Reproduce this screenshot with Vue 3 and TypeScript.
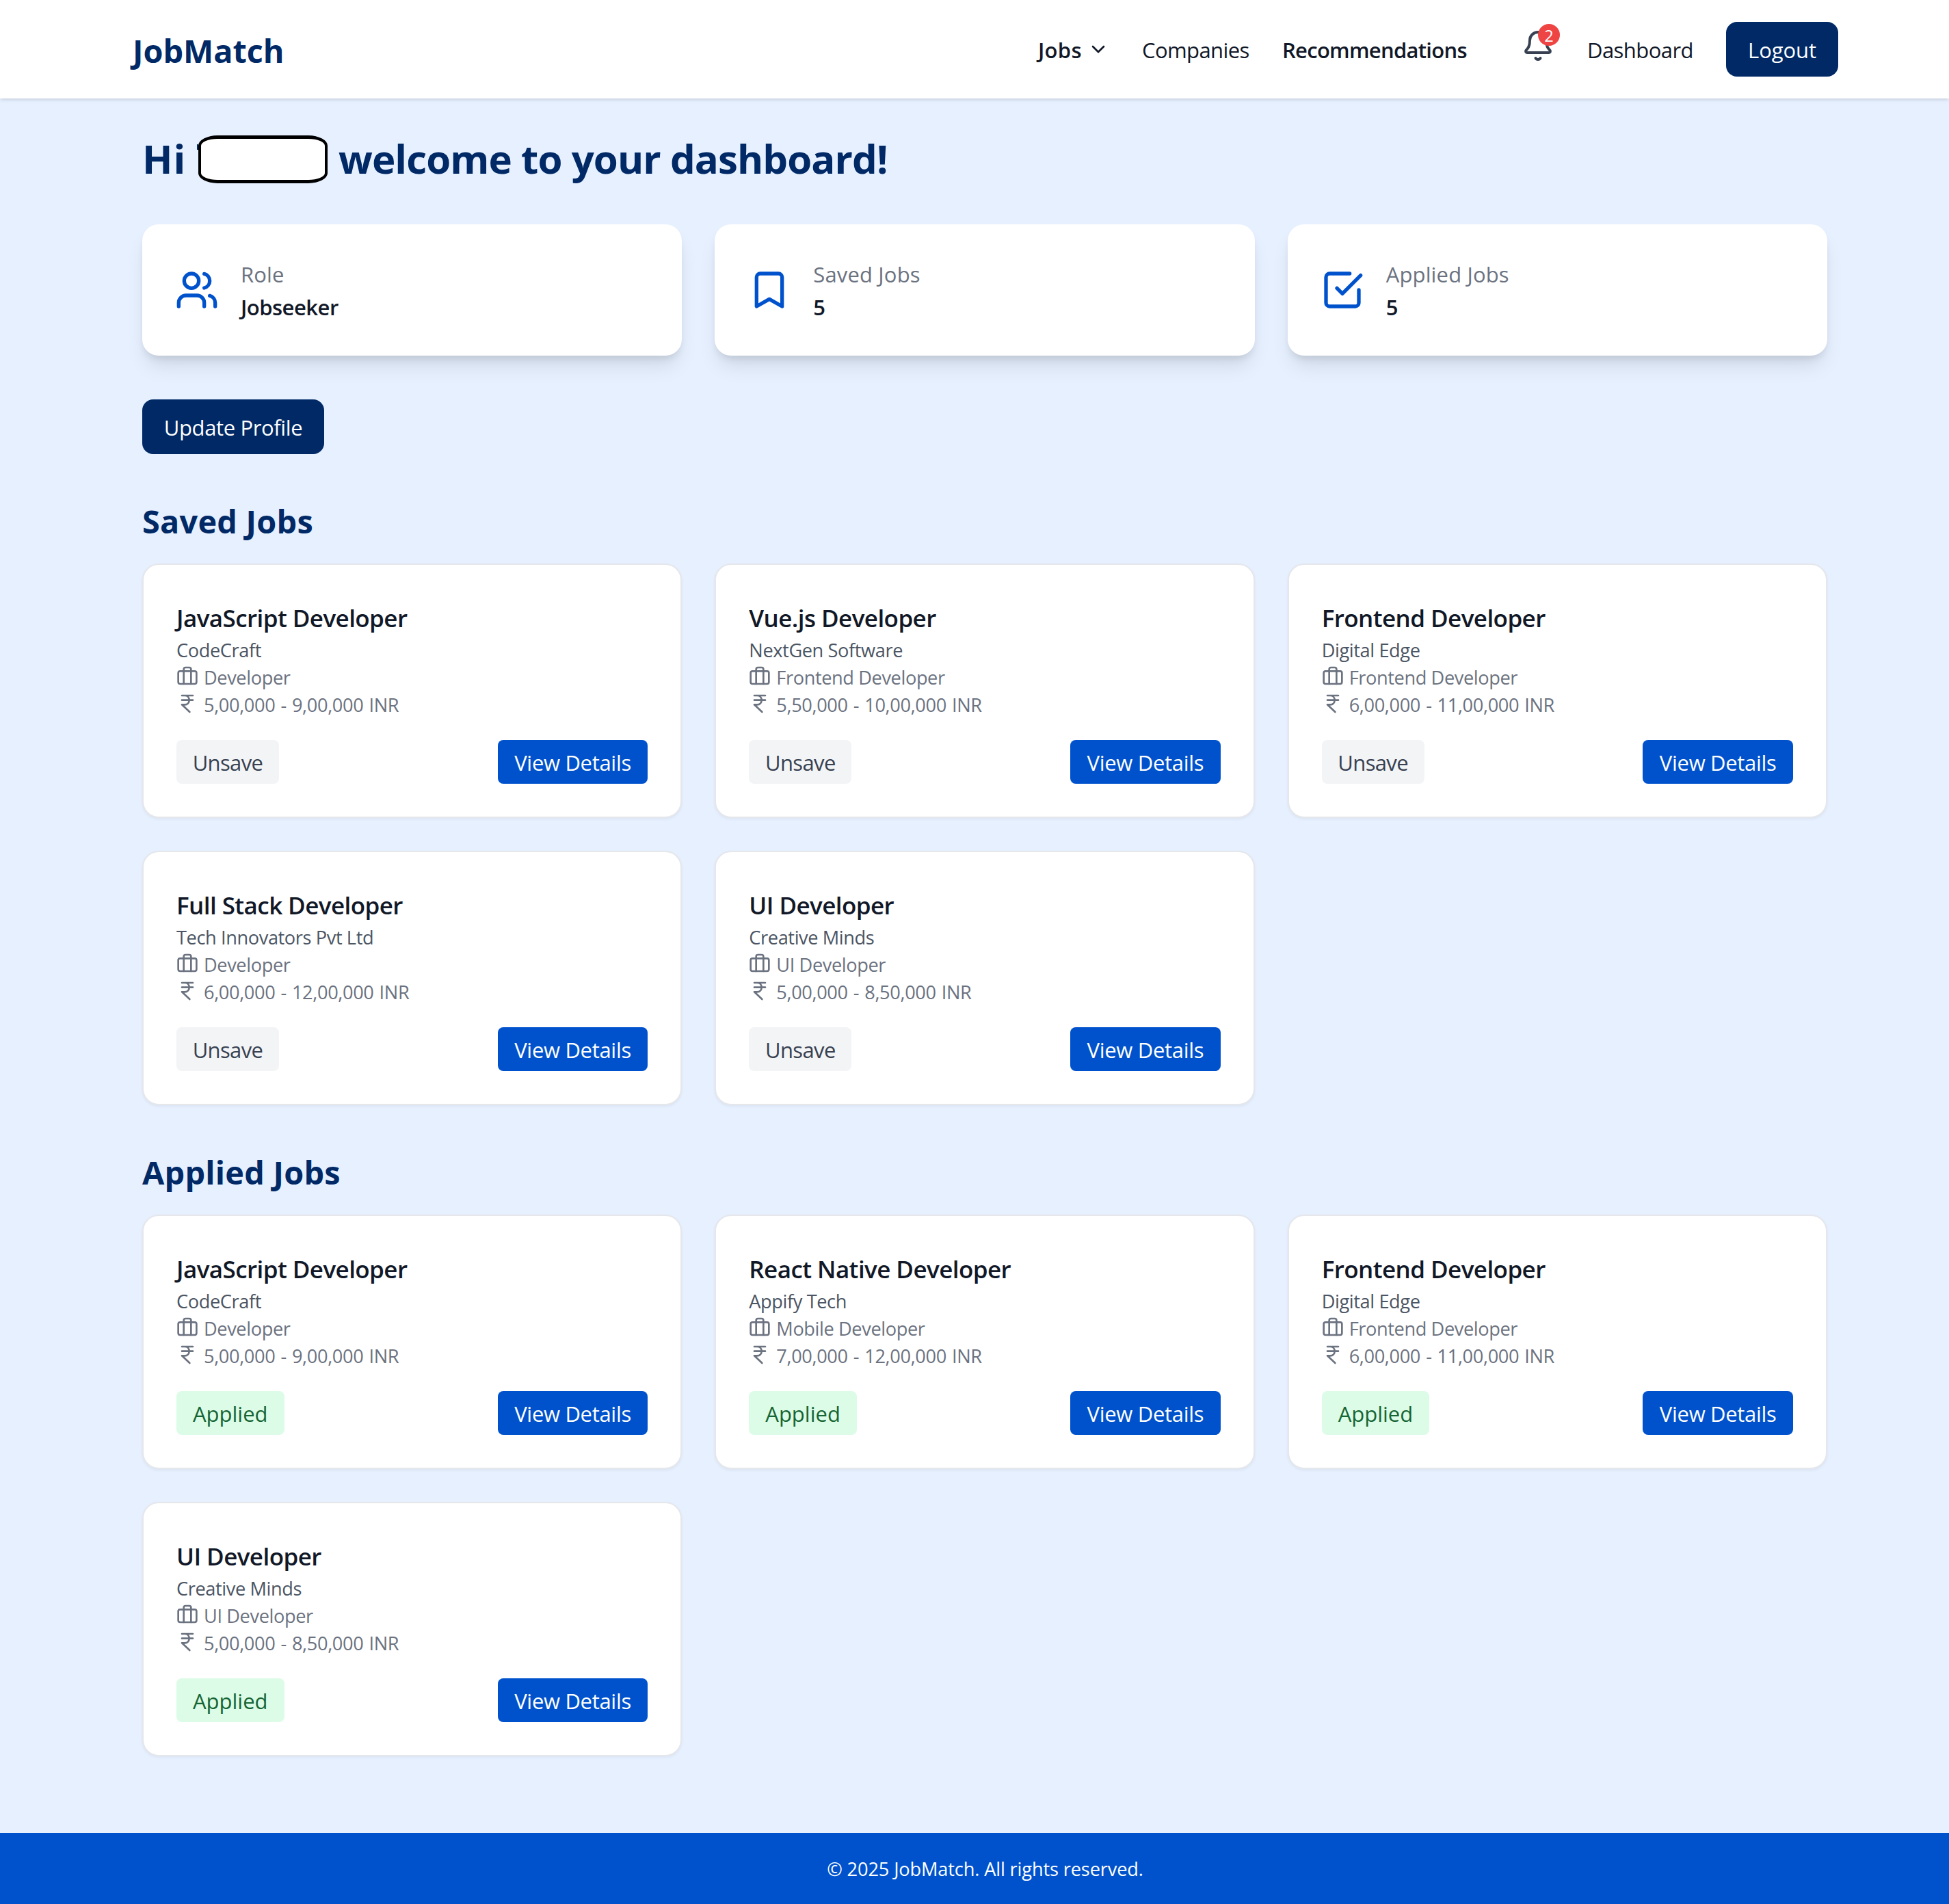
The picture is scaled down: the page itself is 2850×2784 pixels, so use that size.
<script setup lang="ts">
interface Job {
  title: string
  company: string
  category: string
  salary: string
}

interface Section {
  heading: string
  applied: boolean
  jobs: Job[]
}

const stats = [
  { label: 'Role', value: 'Jobseeker', icon: 'users' },
  { label: 'Saved Jobs', value: '5', icon: 'bookmark' },
  { label: 'Applied Jobs', value: '5', icon: 'check' },
]

const jsDev: Job = { title: 'JavaScript Developer', company: 'CodeCraft', category: 'Developer', salary: '5,00,000 - 9,00,000 INR' }
const frontend: Job = { title: 'Frontend Developer', company: 'Digital Edge', category: 'Frontend Developer', salary: '6,00,000 - 11,00,000 INR' }
const uiDev: Job = { title: 'UI Developer', company: 'Creative Minds', category: 'UI Developer', salary: '5,00,000 - 8,50,000 INR' }

const sections: Section[] = [
  {
    heading: 'Saved Jobs',
    applied: false,
    jobs: [
      jsDev,
      { title: 'Vue.js Developer', company: 'NextGen Software', category: 'Frontend Developer', salary: '5,50,000 - 10,00,000 INR' },
      frontend,
      { title: 'Full Stack Developer', company: 'Tech Innovators Pvt Ltd', category: 'Developer', salary: '6,00,000 - 12,00,000 INR' },
      uiDev,
    ],
  },
  {
    heading: 'Applied Jobs',
    applied: true,
    jobs: [
      jsDev,
      { title: 'React Native Developer', company: 'Appify Tech', category: 'Mobile Developer', salary: '7,00,000 - 12,00,000 INR' },
      frontend,
      uiDev,
    ],
  },
]
</script>

<template>
  <div class="page">
    <header class="nav">
      <div class="nav-inner">
        <a class="logo">JobMatch</a>
        <nav class="links">
          <a class="link jobs">
            <span class="strong">Jobs</span>
            <svg class="chevron" viewBox="0 0 24 24"><path d="m6 9 6 6 6-6" /></svg>
          </a>
          <a class="link companies">Companies</a>
          <a class="link strong recs">Recommendations</a>
          <button class="bell">
            <svg viewBox="0 0 24 24">
              <path d="M10.268 21a2 2 0 0 0 3.464 0" />
              <path d="M3.262 15.326A1 1 0 0 0 4 17h16a1 1 0 0 0 .74-1.673C19.41 13.956 18 12.499 18 8A6 6 0 0 0 6 8c0 4.499-1.411 5.956-2.738 7.326" />
            </svg>
            <span class="badge">2</span>
          </button>
          <a class="link dash">Dashboard</a>
          <button class="btn-navy logout">Logout</button>
        </nav>
      </div>
    </header>

    <main class="main">
      <h1 class="greeting">
        <span class="hi">Hi</span>
        <span class="redacted"></span>
        <span class="welcome">welcome to your dashboard!</span>
      </h1>

      <div class="grid">
        <div v-for="s in stats" :key="s.label" class="stat">
          <svg viewBox="0 0 24 24">
            <template v-if="s.icon === 'users'">
              <path d="M16 21v-2a4 4 0 0 0-4-4H6a4 4 0 0 0-4 4v2" />
              <circle cx="9" cy="7" r="4" />
              <path d="M22 21v-2a4 4 0 0 0-3-3.87" />
              <path d="M16 3.13a4 4 0 0 1 0 7.75" />
            </template>
            <path v-else-if="s.icon === 'bookmark'" d="m19 21-7-4-7 4V5a2 2 0 0 1 2-2h10a2 2 0 0 1 2 2v16z" />
            <template v-else>
              <path d="m9 11 3 3L22 4" />
              <path d="M21 12v7a2 2 0 0 1-2 2H5a2 2 0 0 1-2-2V5a2 2 0 0 1 2-2h11" />
            </template>
          </svg>
          <div>
            <p class="stat-label">{{ s.label }}</p>
            <p class="stat-value">{{ s.value }}</p>
          </div>
        </div>
      </div>

      <button class="btn-navy update">Update Profile</button>

      <section v-for="sec in sections" :key="sec.heading" class="section">
        <h2>{{ sec.heading }}</h2>
        <div class="grid">
          <article v-for="job in sec.jobs" :key="job.title" class="card">
            <h3>{{ job.title }}</h3>
            <p class="company">{{ job.company }}</p>
            <p class="meta">
              <svg viewBox="0 0 24 24">
                <rect x="2" y="7" width="20" height="14" rx="2" />
                <path d="M16 21V5a2 2 0 0 0-2-2h-4a2 2 0 0 0-2 2v16" />
              </svg>
              <span class="category">{{ job.category }}</span>
            </p>
            <p class="meta">
              <svg class="rupee" viewBox="0 0 24 24">
                <path d="M6 3h12M6 8h12m-12 5 8.5 8M6 13h3M9 13c6.667 0 6.667-10 0-10" />
              </svg>
              <span class="salary">{{ job.salary }}</span>
            </p>
            <div class="actions">
              <span v-if="sec.applied" class="tag applied">Applied</span>
              <button v-else class="tag unsave">Unsave</button>
              <button class="tag view">View Details</button>
            </div>
          </article>
        </div>
      </section>
    </main>

    <footer class="footer">© 2025 JobMatch. All rights reserved.</footer>
  </div>
</template>

<style>
body {
  background: #e6f0ff;
}
</style>

<style scoped>
.page {
  font-family: "Segoe UI", "Open Sans", "Noto Sans", sans-serif;
  font-size: 31px;
  line-height: 48px;
  color: #111827;
  min-height: 2784px;
  display: flex;
  flex-direction: column;
  background: #e6f0ff;
}
* {
  box-sizing: border-box;
}
h1, h2, h3, p {
  margin: 0;
}
button {
  font: inherit;
  letter-spacing: inherit;
  color: inherit;
  border: 0;
  background: none;
  padding: 0;
  white-space: nowrap;
}
svg {
  display: block;
  flex: none;
  fill: none;
  stroke: currentColor;
  stroke-width: 2;
  stroke-linecap: round;
  stroke-linejoin: round;
}

.nav {
  height: 144px;
  padding-left: 30px;
  background: #fff;
  box-shadow: 0 2px 6px rgba(0, 0, 0, 0.1), 0 2px 4px -2px rgba(0, 0, 0, 0.1);
}
.nav-inner {
  width: 2560px;
  height: 144px;
  margin: 0 auto;
  padding: 0 32px;
  display: flex;
  align-items: center;
  justify-content: space-between;
}
.logo {
  font-size: 46.8px;
  line-height: 64px;
  padding: 4px 0 0 2px;
  font-weight: 700;
  letter-spacing: 0;
  color: #002966;
}
.links {
  display: flex;
  align-items: center;
}
.link {
  padding-top: 2px;
  margin-right: 48px;
  white-space: nowrap;
}
.strong {
  font-weight: 600;
}
.jobs {
  display: flex;
  align-items: center;
  width: 104px;
  letter-spacing: 0.3px;
}
.chevron {
  width: 32px;
  height: 32px;
  margin: -2px 0 0 auto;
}
.companies {
  width: 157px;
  letter-spacing: -0.6px;
}
.recs {
  width: 271px;
  letter-spacing: -0.72px;
}
.bell {
  position: relative;
  width: 48px;
  height: 48px;
  margin: 0 48px 10px 31px;
  color: #374151;
}
.bell svg {
  width: 48px;
  height: 48px;
}
.badge {
  position: absolute;
  top: -8px;
  right: -8px;
  width: 32px;
  height: 32px;
  border-radius: 50%;
  background: #ef4444;
  color: #fff;
  font-size: 23.5px;
  line-height: 34px;
  text-align: center;
}
.dash {
  width: 155px;
  letter-spacing: -0.55px;
}
.btn-navy {
  height: 80px;
  padding: 2px 0 0;
  border-radius: 16px;
  background: #002966;
  color: #fff;
  text-align: center;
}
.logout {
  width: 164px;
  letter-spacing: -0.1px;
}

.main {
  width: 2464px;
  margin: 48px 178px 0 208px;
  flex: 1;
}
.greeting {
  display: flex;
  height: 72px;
  margin-bottom: 64px;
  font-size: 58.2px;
  line-height: 79px;
  font-weight: 700;
  color: #002966;
  white-space: nowrap;
}
.hi {
  width: 82px;
  letter-spacing: 1px;
}
.redacted {
  position: relative;
  width: 189px;
  height: 70px;
  margin: 6px 16px 0 0;
  border: 5px solid #000;
  border-left-width: 4px;
  border-right-width: 4px;
  border-radius: 28px / 15px;
  background: #fff;
}
/* sliver of the hidden name's first letter */
.redacted::before {
  content: "";
  position: absolute;
  left: -6px;
  top: 8px;
  width: 2px;
  height: 8px;
  background: #002966;
}
.welcome {
  letter-spacing: -0.93px;
}

.grid {
  display: grid;
  grid-template-columns: repeat(3, 1fr);
  gap: 48px;
}
.stat {
  display: flex;
  align-items: center;
  gap: 32px;
  height: 192px;
  padding: 48px;
  border-radius: 24px;
  background: #fff;
  box-shadow: 0 20px 30px -6px rgba(0, 0, 0, 0.1), 0 8px 12px -4px rgba(0, 0, 0, 0.1);
}
.stat svg {
  width: 64px;
  height: 64px;
  color: #0052cc;
}
.stat p {
  height: 48px;
  line-height: 50px;
}
.stat-label {
  color: #6b7280;
  letter-spacing: 0.15px;
}
.stat-value {
  font-weight: 600;
  letter-spacing: -0.5px;
}
.update {
  display: block;
  width: 266px;
  margin-top: 64px;
  letter-spacing: -0.37px;
}

.section {
  margin-top: 64px;
}
.section h2 {
  height: 64px;
  margin-bottom: 32px;
  font-size: 46.8px;
  line-height: 68px;
  font-weight: 700;
  letter-spacing: 0.25px;
  color: #002966;
}
.card {
  height: 372px;
  padding: 48px;
  border: 2px solid #e5e7eb;
  border-radius: 24px;
  background: #fff;
  box-shadow: 0 2px 4px rgba(0, 0, 0, 0.05);
}
.card h3 {
  height: 56px;
  font-size: 35px;
  line-height: 60px;
  font-weight: 600;
  letter-spacing: -0.57px;
}
.company {
  height: 40px;
  font-size: 27.2px;
  line-height: 42px;
  letter-spacing: -0.4px;
  color: #4b5563;
}
.meta {
  display: flex;
  gap: 8px;
  height: 40px;
  font-size: 27.2px;
  line-height: 42px;
  color: #6b7280;
}
.meta svg {
  width: 32px;
  height: 32px;
  margin-top: 2px;
}
.meta .rupee {
  margin-top: 3px;
}
.category {
  letter-spacing: -0.4px;
}
.salary {
  letter-spacing: -0.37px;
  word-spacing: 1.4px;
}
.actions {
  display: flex;
  justify-content: space-between;
  margin-top: 32px;
}
.tag {
  height: 64px;
  border-radius: 8px;
  line-height: 66px;
  text-align: center;
}
.unsave {
  width: 150px;
  background: #f3f4f6;
  color: #374151;
  letter-spacing: -0.64px;
}
.applied {
  width: 157.5px;
  background: #dcfce7;
  color: #166534;
}
.view {
  width: 219.6px;
  background: #0052cc;
  color: #fff;
  letter-spacing: -0.31px;
}

.footer {
  height: 104px;
  padding-left: 31px;
  background: #0052cc;
  color: #fff;
  font-size: 27.2px;
  line-height: 106px;
  letter-spacing: -0.14px;
  text-align: center;
}
</style>
